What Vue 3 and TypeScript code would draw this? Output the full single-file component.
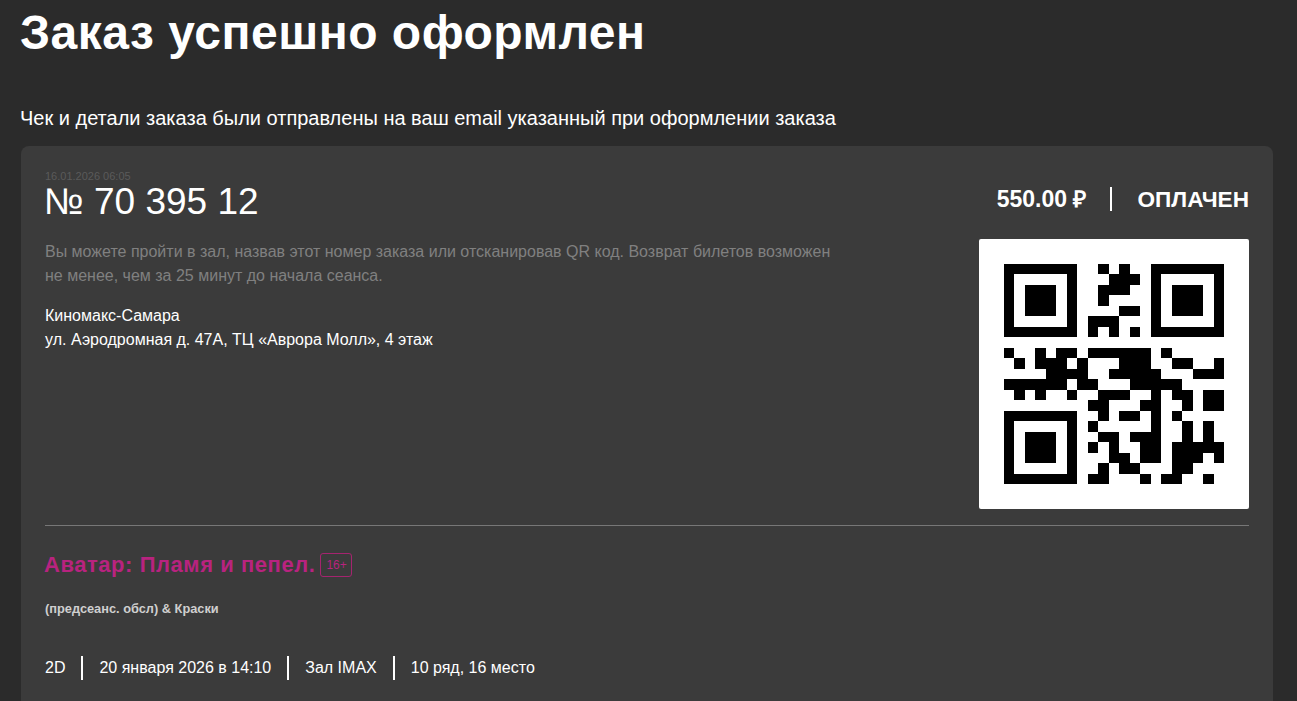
<script setup lang="ts">
const size = 21
const finder = (r: number, c: number): boolean => {
  const inBox = (ro: number, co: number) => {
    const y = r - ro
    const x = c - co
    if (x < 0 || y < 0 || x > 6 || y > 6) return false
    const edge = x === 0 || y === 0 || x === 6 || y === 6
    const core = x >= 2 && x <= 4 && y >= 2 && y <= 4
    return edge || core
  }
  return inBox(0, 0) || inBox(0, 14) || inBox(14, 0)
}
const data: Record<number, number[]> = {
  0: [9, 11],
  1: [10, 11, 12],
  2: [9, 10, 11],
  3: [9],
  4: [11, 12],
  5: [8, 9, 10],
  6: [8, 10, 12],
  8: [0, 3, 5, 6, 8, 9, 10, 11, 12, 13, 15],
  9: [1, 3, 4, 5, 7, 11, 12, 13, 16, 17, 20],
  10: [4, 5, 6, 7, 10, 11, 12, 13, 14, 18, 19, 20],
  11: [0, 1, 2, 3, 4, 5, 7, 8, 12, 13, 14, 15, 16],
  12: [1, 3, 6, 9, 10, 11, 14, 16, 17, 19, 20],
  13: [8, 9, 13, 14, 17, 19, 20],
  14: [9, 11, 12, 14, 16],
  15: [8, 14, 17, 19],
  16: [9, 10, 12, 13, 14, 17, 19],
  17: [8, 10, 13, 14, 16, 17, 18, 19, 20],
  18: [10, 11, 13, 14, 16, 17, 18, 20],
  19: [9, 11, 12, 16, 17],
  20: [8, 9, 13, 15, 16, 19]
}
const cells: { x: number; y: number }[] = []
for (let r = 0; r < size; r++) {
  for (let c = 0; c < size; c++) {
    if (finder(r, c) || (data[r] ?? []).includes(c)) cells.push({ x: c, y: r })
  }
}
const sessionInfo = ['2D', '20 января 2026 в 14:10', 'Зал IMAX', '10 ряд, 16 место']
</script>

<template>
  <main class="page">
    <h1 class="title">Заказ успешно оформлен</h1>
    <p class="lead">Чек и детали заказа были отправлены на ваш email указанный при оформлении заказа</p>
    <section class="card">
      <div class="top">
        <div class="info">
          <div class="date">16.01.2026 06:05</div>
          <div class="number">№ 70 395 12</div>
          <p class="note">Вы можете пройти в зал, назвав этот номер заказа или отсканировав QR код. Возврат билетов возможен не менее, чем за 25 минут до начала сеанса.</p>
          <p class="place">Киномакс-Самара<br />ул. Аэродромная д. 47А, ТЦ «Аврора Молл», 4 этаж</p>
        </div>
        <div class="side">
          <div class="status">
            <span class="price">550.00 ₽</span>
            <span class="state">ОПЛАЧЕН</span>
          </div>
          <div class="qr">
            <svg width="220" height="220" viewBox="0 0 21 21" shape-rendering="crispEdges" aria-label="QR код">
              <rect v-for="(cell, i) in cells" :key="i" :x="cell.x" :y="cell.y" width="1" height="1" fill="#000" />
            </svg>
          </div>
        </div>
      </div>
      <div class="movie">
        <div class="movie-head">
          <h2 class="movie-title">Аватар: Пламя и пепел.</h2>
          <span class="age">16+</span>
        </div>
        <div class="sub">(предсеанс. обсл) &amp; Краски</div>
        <ul class="meta">
          <li v-for="item in sessionInfo" :key="item">{{ item }}</li>
        </ul>
      </div>
    </section>
  </main>
</template>

<style scoped>
.page {
  padding: 0 24px 0 20px;
  font-family: "Liberation Sans", Arial, sans-serif;
  color: #fff;
}
.title {
  margin: 0;
  padding-top: 7px;
  font-size: 48px;
  line-height: 52px;
  font-weight: 700;
  letter-spacing: 0.5px;
}
.lead {
  margin: 0;
  padding-top: 47px;
  font-size: 20px;
  line-height: 24px;
}
.card {
  margin: 16px 0 0 1px;
  padding: 24px;
  background: #3b3b3b;
  border-radius: 8px;
  min-height: 600px;
}
.top {
  display: flex;
  justify-content: space-between;
  padding-bottom: 16px;
  border-bottom: 1px solid #777;
}
.info {
  width: 800px;
}
.date {
  font-size: 11px;
  line-height: 12px;
  color: #5a5a5a;
}
.number {
  font-size: 37px;
  line-height: 40px;
  margin-left: -1px;
}
.note {
  margin: 18px 0 0;
  font-size: 16px;
  line-height: 24px;
  color: #808080;
}
.place {
  margin: 16px 0 0;
  font-size: 16px;
  line-height: 24px;
}
.side {
  display: flex;
  flex-direction: column;
  align-items: flex-end;
}
.status {
  display: flex;
  align-items: center;
  height: 24px;
  margin-top: 17px;
  font-weight: 700;
}
.price {
  padding: 1px 24px 0 0;
  border-right: 2px solid #fff;
  font-size: 23px;
  line-height: 23px;
}
.state {
  padding: 1px 0 0 25px;
  font-size: 22.6px;
  line-height: 23px;
}
.qr {
  width: 270px;
  height: 270px;
  margin-top: 28px;
  display: flex;
  align-items: center;
  justify-content: center;
  background: #fff;
  border-radius: 2px;
}
.movie {
  padding-top: 24px;
}
.movie-head {
  display: flex;
  align-items: center;
  gap: 5px;
  height: 30px;
  margin-left: -1px;
}
.movie-title {
  margin: 0;
  font-size: 22px;
  font-weight: 700;
  color: #b8237f;
  letter-spacing: 0.55px;
}
.age {
  font-size: 12px;
  line-height: 22px;
  padding: 0 4px 0 5px;
  color: #b8237f;
  border: 1px solid #a5246f;
  border-radius: 3px;
}
.sub {
  margin-top: 21px;
  font-size: 12.8px;
  line-height: 16px;
  font-weight: 700;
  color: #cfcfcf;
}
.meta {
  display: flex;
  list-style: none;
  margin: 39px 0 0;
  padding: 0;
  font-size: 16px;
  line-height: 24px;
}
.meta li {
  padding: 0 16px;
  border-left: 2px solid #fff;
}
.meta li:first-child {
  padding-left: 0;
  border-left: 0;
}
</style>

<style>
html,
body {
  margin: 0;
  background: #2b2b2b;
  overflow: hidden;
}
</style>
